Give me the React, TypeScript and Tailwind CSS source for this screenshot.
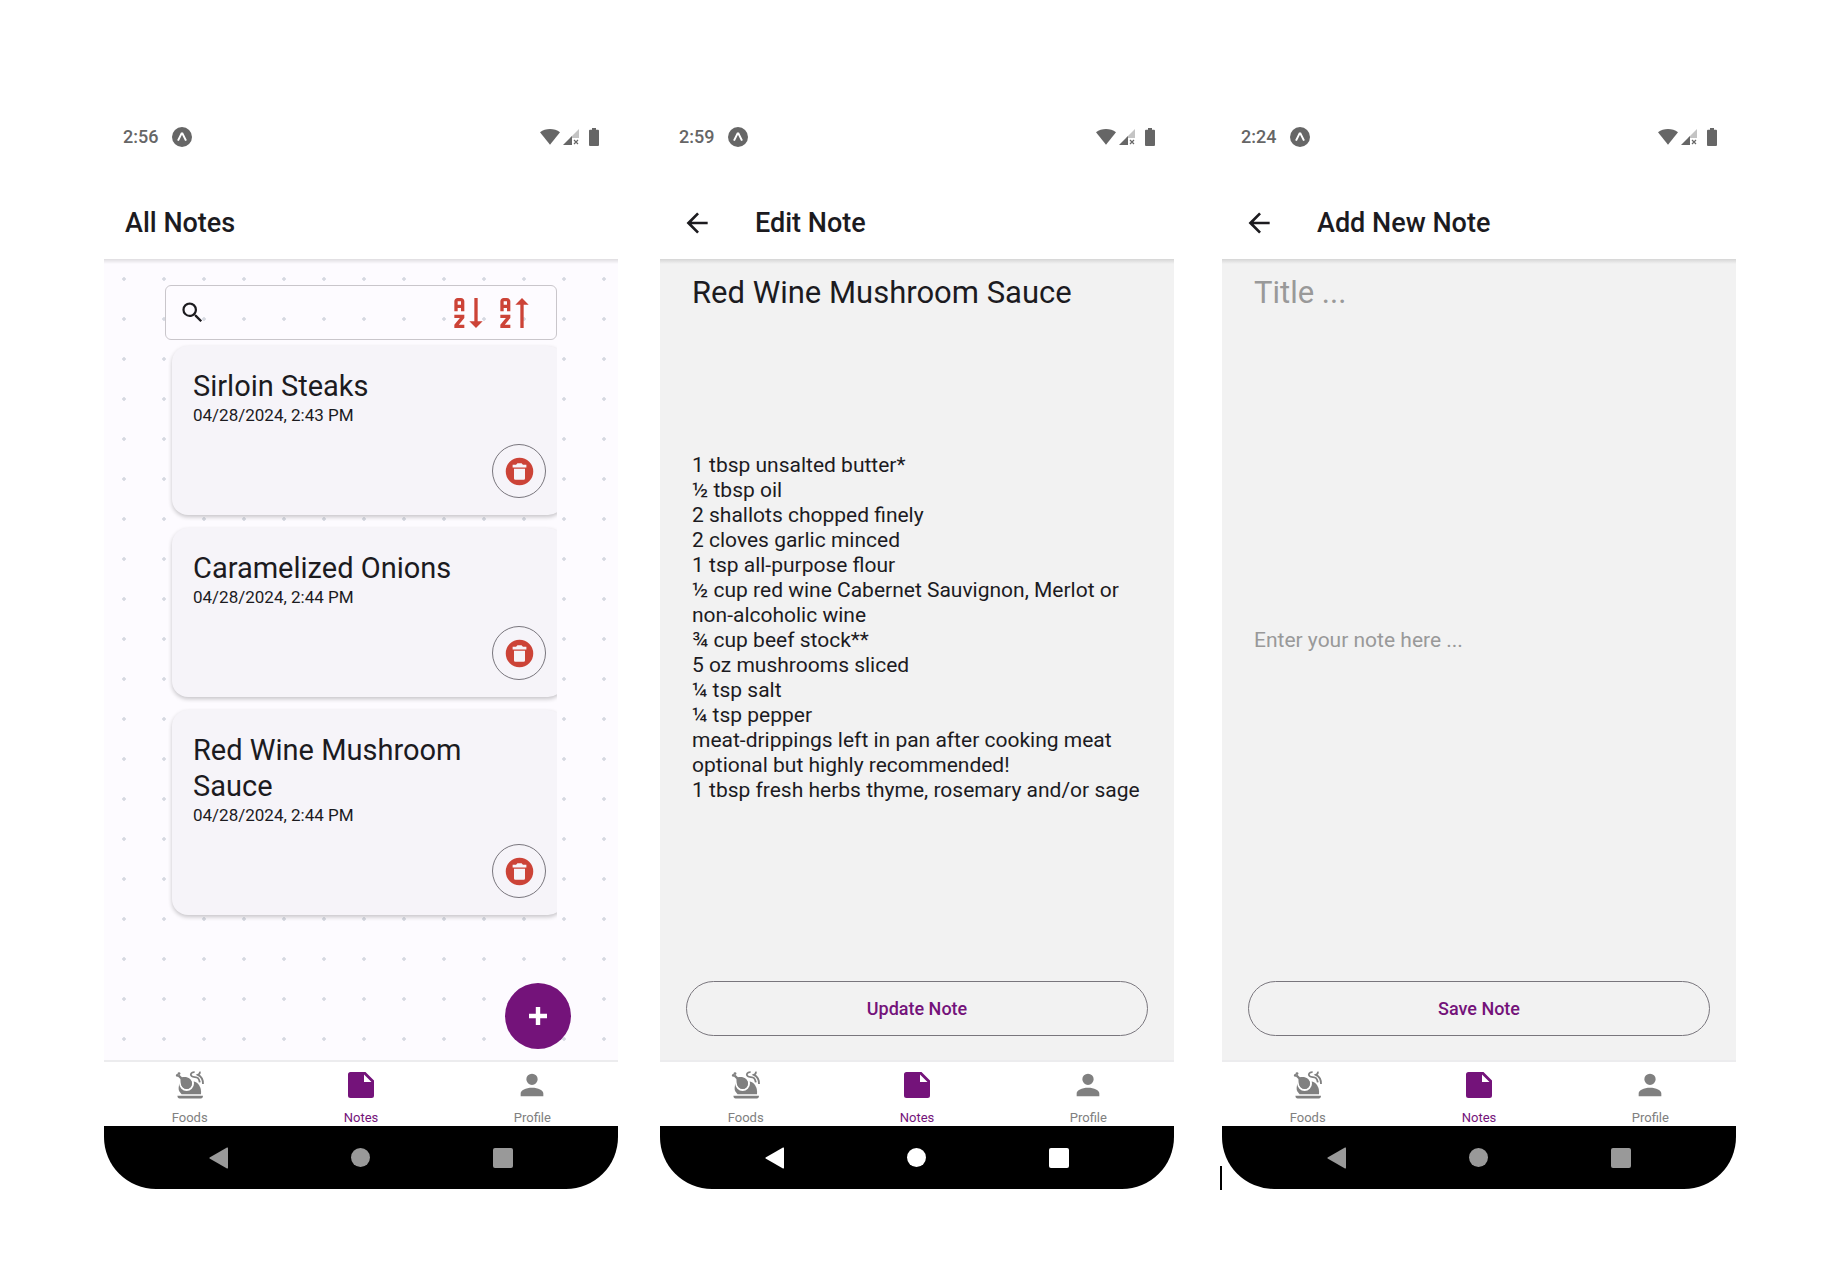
import React from "react";

const PATHS = {
  magnify:
    "M9.5,3A6.5,6.5 0 0,1 16,9.5C16,11.11 15.41,12.59 14.44,13.73L14.71,14H15.5L20.5,19L19,20.5L14,15.5V14.71L13.73,14.44C12.59,15.41 11.11,16 9.5,16A6.5,6.5 0 0,1 3,9.5A6.5,6.5 0 0,1 9.5,3M9.5,5C7,5 5,7 5,9.5C5,12 7,14 9.5,14C12,14 14,12 14,9.5C14,7 12,5 9.5,5Z",
  sortAscending:
    "M19 17H22L18 21L14 17H17V3H19M11 13V15L7.67 19H11V21H5V19L8.33 15H5V13M9 3H7C5.9 3 5 3.9 5 5V11H7V9H9V11H11V5C11 3.9 10.1 3 9 3M9 7H7V5H9Z",
  sortDescending:
    "M19 7H22L18 3L14 7H17V21H19M11 13V15L7.67 19H11V21H5V19L8.33 15H5V13M9 3H7C5.9 3 5 3.9 5 5V11H7V9H9V11H11V5C11 3.9 10.1 3 9 3M9 7H7V5H9Z",
  deleteCircle:
    "M12,2A10,10 0 0,1 22,12A10,10 0 0,1 12,22A10,10 0 0,1 2,12A10,10 0 0,1 12,2M17,7H14.5L13.5,6H10.5L9.5,7H7V9H17V7M9,18H15A1,1 0 0,0 16,17V10H8V17A1,1 0 0,0 9,18Z",
  arrowLeft: "M20,11V13H8L13.5,18.5L12.08,19.92L4.16,12L12.08,4.08L13.5,5.5L8,11H20Z",
  account:
    "M12,4A4,4 0 0,1 16,8A4,4 0 0,1 12,12A4,4 0 0,1 8,8A4,4 0 0,1 12,4M12,14C16.42,14 20,15.79 20,18V20H4V18C4,15.79 7.58,14 12,14Z",
};

function Icon({ name, className }: { name: keyof typeof PATHS; className: string }) {
  return (
    <svg viewBox="0 0 24 24" fill="currentColor" aria-hidden="true" className={className}>
      <path d={PATHS[name]} />
    </svg>
  );
}

function TurkeyIcon() {
  return (
    <svg viewBox="1 0 34 34" fill="none" aria-hidden="true" className="size-[34px]">
      <path
        d="M7.6 15.5C6.4 18.6 6.2 21.6 7.4 23.6L9.6 26.2H29C29.8 19.5 26.4 13.4 19.6 13Z"
        fill="currentColor"
      />
      <circle cx="14.6" cy="15.6" r="6.4" fill="currentColor" stroke="#fff" strokeWidth="2" />
      <path
        d="M9.4 9.4C12.6 8.4 15.8 9 17.8 10.8C20.4 13 20.6 17 18.4 19.2C16.2 21.4 12.6 21.2 10.4 18.8C8.6 16.8 8.2 13.2 8.6 10.4Z"
        fill="currentColor"
      />
      <path d="M6.4 7.4L10.4 11.4" stroke="currentColor" strokeWidth="2.2" />
      <circle cx="5.3" cy="7.4" r="1.4" fill="currentColor" />
      <circle cx="7" cy="5.6" r="1.4" fill="currentColor" />
      <path d="M5.4 27.8H31C31 29.4 30.2 30.4 28.8 30.4H7.6C6.2 30.4 5.4 29.4 5.4 27.8Z" fill="currentColor" />
      <path
        d="M22.6 4.2C19.2 4 17.8 6.6 19.6 8.2C21.4 9.8 24.2 8.6 26 10.2C27.2 11.4 27.4 12.6 27.8 14.4"
        stroke="currentColor"
        strokeWidth="1.8"
      />
      <path
        d="M27.6 3.6C28.4 5 27.4 6 25.8 6.8C28.6 8 31.2 9.8 31 16"
        stroke="currentColor"
        strokeWidth="1.8"
      />
    </svg>
  );
}

function NoteIcon() {
  return (
    <svg viewBox="0 0 34 34" fill="currentColor" aria-hidden="true" className="size-[34px]">
      <path d="M6.5 4H21.5L30 12.5V27.5A2.5 2.5 0 0 1 27.5 30H6.5A2.5 2.5 0 0 1 4 27.5V6.5A2.5 2.5 0 0 1 6.5 4ZM20 6.5V14H27.5Z" />
    </svg>
  );
}

function StatusBar({ time }: { time: string }) {
  return (
    <div className="flex h-[54px] items-center justify-between px-[19px] text-[#666]">
      <div className="flex items-center gap-[14px]">
        <span className="text-lg font-medium">{time}</span>
        <svg viewBox="0 0 20 20" aria-hidden="true" className="size-5">
          <circle cx="10" cy="10" r="10" fill="currentColor" />
          <path d="M6 13.6L9.6 6.4H10.4L14 13.6" fill="none" stroke="#fff" strokeWidth="2" />
        </svg>
      </div>
      <div className="flex items-center">
        <svg viewBox="0 0 20 16" fill="currentColor" aria-hidden="true" className="h-4 w-5">
          <path d="M0 3.2C5.6 -1 14.4 -1 20 3.2L10 15.8Z" />
        </svg>
        <svg viewBox="0 0 16 16" aria-hidden="true" className="ml-[3px] size-4">
          <path d="M16 0V9H7Z" fill="#c4c4c4" />
          <path d="M9 7V16H0Z" fill="currentColor" />
          <path d="M11 11L15 15M15 11L11 15" stroke="currentColor" strokeWidth="1.2" />
        </svg>
        <svg viewBox="0 0 10 18" fill="currentColor" aria-hidden="true" className="ml-[10px] h-[18px] w-[10px]">
          <path d="M3 0H7V1.8H9A1 1 0 0 1 10 2.8V17A1 1 0 0 1 9 18H1A1 1 0 0 1 0 17V2.8A1 1 0 0 1 1 1.8H3Z" />
        </svg>
      </div>
    </div>
  );
}

function TabBar() {
  const tab = "flex flex-1 flex-col items-center justify-between pt-[6px] text-[13px] leading-4";
  return (
    <nav className="flex h-[66px] border-t-2 border-[#ececee] bg-white text-[#808080]">
      <a href="#foods" className={tab}>
        <TurkeyIcon />
        Foods
      </a>
      <a href="#notes" aria-current="page" className={tab + " text-[#74137a]"}>
        <NoteIcon />
        Notes
      </a>
      <a href="#profile" className={tab}>
        <Icon name="account" className="size-[34px]" />
        Profile
      </a>
    </nav>
  );
}

function SystemNav({ bright }: { bright?: boolean }) {
  return (
    <div
      className={
        "flex h-[63px] items-center justify-between rounded-b-[52px] bg-black px-[105px] " +
        (bright ? "text-white" : "text-[#999]")
      }
    >
      <button type="button" aria-label="Back">
        <svg viewBox="0 0 19 22" fill="currentColor" className="h-[22px] w-[19px]">
          <path d="M18 0.6Q19 0.2 19 1.2V20.8Q19 21.8 18 21.4L0.6 11.6Q0 11 0.6 10.4Z" />
        </svg>
      </button>
      <button type="button" aria-label="Home" className="size-[19px] rounded-full bg-current" />
      <button type="button" aria-label="Recent apps" className="size-5 rounded-xs bg-current" />
    </div>
  );
}

function Phone({
  time,
  title,
  back,
  brightNav,
  className,
  bodyClassName,
  children,
}: {
  time: string;
  title: string;
  back?: boolean;
  brightNav?: boolean;
  className?: string;
  bodyClassName: string;
  children: React.ReactNode;
}) {
  return (
    <section className={"relative flex min-w-0 flex-1 flex-col " + (className ?? "")}>
      <StatusBar time={time} />
      <header className="mt-[23px] flex h-[72px] items-center bg-white pl-[21px] text-[#1c1b1f]">
        {back && (
          <button type="button" aria-label="Go back" className="mr-[42px]">
            <Icon name="arrowLeft" className="size-8" />
          </button>
        )}
        <h1 className="text-[27px] font-medium">{title}</h1>
      </header>
      <main className={"relative flex min-h-[801px] flex-col " + bodyClassName}>
        <div className="absolute inset-x-0 top-0 h-[5px] bg-linear-to-b from-black/12 to-transparent" />
        {children}
      </main>
      <TabBar />
      <SystemNav bright={brightNav} />
    </section>
  );
}

function NoteCard({ title, date }: { title: string; date: string }) {
  return (
    <article className="ml-[7px] flex w-full flex-col rounded-2xl bg-[#f6f4f9] pt-[22px] pr-[18px] pb-[17px] pl-[21px] text-[#1c1b1f] shadow-[0_2px_4px_rgba(0,0,0,0.22)]">
      <h2 className="pr-8 text-[29px] leading-9">{title}</h2>
      <time className="text-[17px] leading-[22px]">{date}</time>
      <button
        type="button"
        aria-label={"Delete " + title}
        className="mt-[18px] flex size-[54px] items-center justify-center self-end rounded-full border border-[#79767d] text-[#cc4337]"
      >
        <Icon name="deleteCircle" className="size-[33px]" />
      </button>
    </article>
  );
}

const NOTES = [
  { title: "Sirloin Steaks", date: "04/28/2024, 2:43 PM" },
  { title: "Caramelized Onions", date: "04/28/2024, 2:44 PM" },
  { title: "Red Wine Mushroom Sauce", date: "04/28/2024, 2:44 PM" },
];

const RECIPE = `1 tbsp unsalted butter*
½ tbsp oil
2 shallots chopped finely
2 cloves garlic minced
1 tsp all-purpose flour
½ cup red wine Cabernet Sauvignon, Merlot or non-alcoholic wine
¾ cup beef stock**
5 oz mushrooms sliced
¼ tsp salt
¼ tsp pepper
meat-drippings left in pan after cooking meat optional but highly recommended!
1 tbsp fresh herbs thyme, rosemary and/or sage
`;

function NoteForm({
  title,
  content,
  rows,
  action,
}: {
  title?: string;
  content?: string;
  rows: number;
  action: string;
}) {
  return (
    <form className="flex flex-1 flex-col pt-4 pb-6 text-[#1c1b1f]" onSubmit={(e) => e.preventDefault()}>
      <input
        aria-label="Title"
        defaultValue={title}
        placeholder="Title ..."
        className="mr-[22px] ml-8 h-9 text-[31px] outline-none placeholder:text-[#999]"
      />
      <div className="mr-[22px] mb-3 ml-8 flex flex-1 items-center">
        <textarea
          aria-label="Note"
          rows={rows}
          defaultValue={content}
          placeholder="Enter your note here ..."
          className="w-full resize-none overflow-hidden text-[21px] leading-[25px] outline-none placeholder:text-[#999]"
        />
      </div>
      <button
        type="submit"
        className="mx-[26px] h-[55px] rounded-full border border-[#79767d] text-lg font-medium text-[#74137a]"
      >
        {action}
      </button>
    </form>
  );
}

export default function App() {
  return (
    <div className="flex min-h-screen items-start bg-white pt-[110px] pr-[102px] pl-[104px] font-['Roboto',sans-serif]">
      <Phone
        time="2:56"
        title="All Notes"
        bodyClassName="bg-[#fdfbff] bg-[radial-gradient(circle,#d6d9e1_1px,#e2e4eb_2px,transparent_2px)] bg-[size:40px_40px]"
      >
        <div className="mx-[61px] mt-[26px] flex h-[55px] items-center rounded-md border border-[#c9c6cb] pr-6 pl-[13px]">
          <label htmlFor="search" className="text-[#1c1b1f]">
            <Icon name="magnify" className="size-[27px]" />
          </label>
          <input id="search" aria-label="Search notes" className="min-w-0 flex-1 px-2 text-lg outline-none" />
          <div className="flex gap-[6px] text-[#cc4337]">
            <button type="button" aria-label="Sort A to Z">
              <Icon name="sortAscending" className="size-10" />
            </button>
            <button type="button" aria-label="Sort Z to A">
              <Icon name="sortDescending" className="size-10" />
            </button>
          </div>
        </div>
        <div className="mx-[61px] mt-[6px] flex flex-col gap-[13px] overflow-x-clip">
          {NOTES.map((note) => (
            <NoteCard key={note.title} title={note.title} date={note.date} />
          ))}
        </div>
        <button
          type="button"
          aria-label="Add note"
          className="absolute right-[47px] bottom-[11px] flex size-[66px] items-center justify-center rounded-full bg-[#74137a] text-white"
        >
          <svg viewBox="0 0 18 18" aria-hidden="true" className="size-[18px]">
            <path d="M9 0V18M0 9H18" stroke="currentColor" strokeWidth="4.4" />
          </svg>
        </button>
      </Phone>

      <Phone time="2:59" title="Edit Note" back brightNav className="ml-[42px]" bodyClassName="bg-[#f2f2f2]">
        <NoteForm title="Red Wine Mushroom Sauce" content={RECIPE} rows={15} action="Update Note" />
      </Phone>

      <Phone time="2:24" title="Add New Note" back className="ml-12" bodyClassName="bg-[#f2f2f2]">
        <NoteForm rows={1} action="Save Note" />
        <span className="absolute top-[907px] -left-[2px] h-6 w-[2px] bg-black" />
      </Phone>
    </div>
  );
}
